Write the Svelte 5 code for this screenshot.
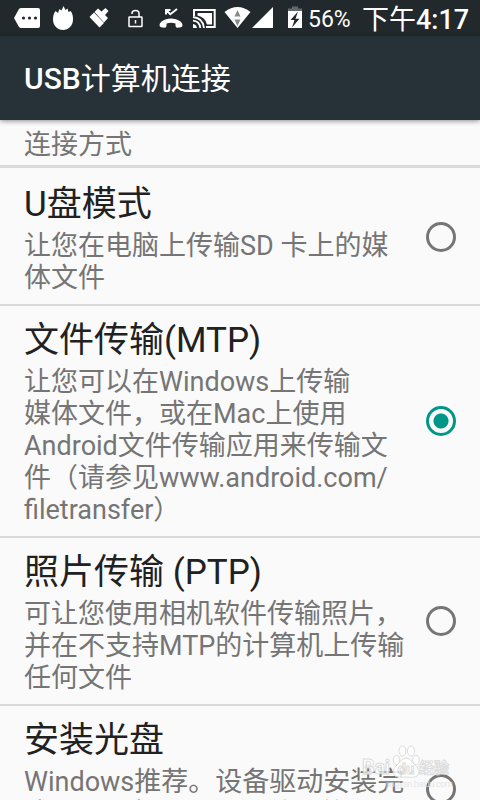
<script>
    let battery = '56%';
    let clock = '4:17';

    let selected = 'mtp';

    const modes = [
        {
            id: 'ums',
            title: 'U盘模式',
            lines: ['让您在电脑上传输SD 卡上的媒', '体文件']
        },
        {
            id: 'mtp',
            title: '文件传输(MTP)',
            lines: [
                '让您可以在Windows上传输',
                '媒体文件，或在Mac上使用',
                'Android文件传输应用来传输文',
                '件（请参见www.android.com/',
                'filetransfer）'
            ]
        },
        {
            id: 'ptp',
            title: '照片传输 (PTP)',
            lines: ['可让您使用相机软件传输照片，', '并在不支持MTP的计算机上传输', '任何文件']
        },
        {
            id: 'cd',
            title: '安装光盘',
            lines: ['Windows推荐。设备驱动安装完', '成后，主机可使用其他功能', '连接电脑']
        }
    ];
</script>

<div class="screen" lang="zh-CN">
    <div class="status">
        <svg width="304" height="36" viewBox="0 0 304 36" fill="#fff">
            <!-- message -->
            <path d="M21 8h17q2 0 2 2v16q0 2-2 2H21q-1 0-2-1l-5-9 5-9q1-1 2-1z" />
            <g fill="#22292d">
                <circle cx="23.5" cy="18" r="1.6" />
                <circle cx="29.5" cy="18" r="1.6" />
                <circle cx="35.5" cy="18" r="1.6" />
            </g>
            <!-- flame -->
            <path d="M55.500 11l2.500 2 1.500-4 2 1.500 2-4.500 2 4 2-1.500 1 3.500 2-1c2 2 2.500 5 2.500 8.500 0 6-4.500 10.500-10 10.500s-10-4.500-10-10.500c0-3 .5-6 2.500-8.500z" />
            <!-- brush -->
            <path d="M89.500 17l4.500-4.500L104 23l-4.500 4.500z" />
            <path d="M94.500 12l3.500-3.500 3.500 3 4-3.500 3 3-3.500 4 3 3-4 4.500z" />
            <!-- unlocked -->
            <g fill="none" stroke="#fff" stroke-width="1.5">
                <rect x="129" y="17" width="13" height="9.5" rx=".5" />
                <path d="M132 14v-.5q0-3 3.500-3t3.500 3V17M135.500 20v3.500" />
            </g>
            <!-- missed call -->
            <path d="M159.500 25q0-2 2-3.500c5.500-3.900 13.500-3.900 19 0q2 1.500 2 3.500 0 1.800-1.500 2.200l-3.500.5q-2 0-2-2V23.500c-3-1-6-1-9 0v2.200q0 2-2 2l-3.500-.5q-1.500-.4-1.500-2.200z" />
            <path d="M166 14.500V10h4.500M166.500 10.500l3.800 3.700 6.700-5.200" fill="none" stroke="#fff" stroke-width="1.9" />
            <!-- cast -->
            <path d="M194 16V10h20.700v17H206" fill="none" stroke="#fff" stroke-width="2" />
            <path d="M197.500 13H212v11.500h-5q-1.500-7-9.500-9z" />
            <path d="M193 17q10 1 11 11M193 20.700q6.500.5 7.300 7.300" fill="none" stroke="#fff" stroke-width="1.8" />
            <path d="M193 24q3.500.5 4 4h-4z" />
            <!-- wifi -->
            <path d="M224.500 12q13-10 26 0L237.500 28z" />
            <path d="M234.500 16.500l3-6.500 3 6.500zM234.500 19.500h6l-3 6.500z" fill="#858a8c" />
            <!-- signal -->
            <path d="M273 7v21h-21z" />
            <!-- battery -->
            <path d="M292 6.500h6v2h4v3h-14v-3h4z" fill="#63686b" />
            <path d="M288 11h14v17h-14z" />
            <path d="M298 11.500l-7.500 8.500h4L292 27.500l7.500-8.700h-4z" fill="#22292d" />
        </svg>
        <span class="battery">{battery}</span>
        <span class="clock">下午<b>{clock}</b></span>
    </div>

    <header><b>USB</b>计算机连接</header>

    <div class="category">连接方式</div>

    <div class="list">
        {#each modes as mode}
            <div class="row" on:click={() => (selected = mode.id)} role="presentation">
                <div class="text">
                    <div class="title">{mode.title}</div>
                    {#each mode.lines as line}
                        <div class="line">{line}</div>
                    {/each}
                </div>
                <span class="radio" class:on={selected == mode.id}></span>
            </div>
        {/each}
    </div>

    <svg class="watermark" width="104" height="46" viewBox="0 0 104 46">
        <g fill="#fff" stroke="#d8d8d8" stroke-width="1">
            <ellipse cx="35.5" cy="15" rx="3.2" ry="4.5" />
            <ellipse cx="41.5" cy="6" rx="3.5" ry="5" />
            <ellipse cx="50" cy="6" rx="3.5" ry="5" />
            <ellipse cx="55" cy="15" rx="3.2" ry="4.5" />
            <path d="M45 13q4 0 6 4l5 5q4 5 0 9-3 2-11 1-8 1-11-1-4-4 0-9l5-5q2-4 6-4z" />
            <text x="1" y="29" class="latin" textLength="28">Bai</text>
            <text x="36.5" y="29" class="du">du</text>
            <text x="58" y="28" class="cn">经验</text>
        </g>
        <text x="25" y="42" class="url" textLength="67">jingyan.baidu.com</text>
    </svg>
</div>

<style>
    :global(body) {
        margin: 0;
        background: #fafafa;
    }

    .screen {
        position: relative;
        width: 480px;
        height: 800px;
        overflow: hidden;
        display: flex;
        flex-direction: column;
        background: #fafafa;
        font-family: Roboto, "Noto Sans CJK SC", sans-serif;
    }

    .status {
        display: flex;
        flex: none;
        height: 36px;
        line-height: 40px;
        background: #22292d;
        color: #fff;
        white-space: nowrap;
    }

    .battery {
        width: 54px;
        padding-left: 4px;
        font-size: 23px;
    }

    .clock {
        font-size: 27px;
    }

    b {
        font-weight: 500;
    }

    header {
        position: relative;
        flex: none;
        height: 84px;
        padding-left: 24px;
        line-height: 86px;
        font-size: 30px;
        color: #fff;
        background: #263238;
        box-shadow: 0 1px 5px rgba(0, 0, 0, 0.45);
    }

    .category {
        flex: none;
        height: 45px;
        padding-left: 24px;
        line-height: 50px;
        font-size: 27px;
        color: #757575;
        border-bottom: 3px solid #dadada;
    }

    .list {
        padding-top: 2px;
    }

    .row {
        display: flex;
        align-items: center;
        justify-content: space-between;
        padding: 13px 24px 14px;
        border-bottom: 2px solid #dadada;
    }

    .text {
        padding-top: 4px;
        margin-bottom: -4px;
        white-space: nowrap;
    }

    .title {
        height: 43px;
        margin-top: -4px;
        margin-bottom: 4px;
        line-height: 44px;
        font-size: 35px;
        color: #212121;
    }

    .line {
        height: 32px;
        line-height: 32px;
        font-size: 27px;
        color: #757575;
    }

    .radio {
        flex: none;
        box-sizing: border-box;
        width: 30px;
        height: 30px;
        border: 3px solid #757575;
        border-radius: 50%;
    }

    .radio.on {
        border-color: #009688;
        background: radial-gradient(circle, #009688 7px, transparent 8px);
    }

    .watermark {
        position: absolute;
        left: 361px;
        top: 745px;
        opacity: 0.85;
    }

    .latin {
        font-size: 20px;
        font-weight: 700;
    }

    .du {
        font-size: 15px;
        font-weight: 700;
    }

    .cn {
        font-size: 15px;
        font-weight: 700;
    }

    .url {
        font-size: 9px;
        fill: #e4e4e4;
    }
</style>
